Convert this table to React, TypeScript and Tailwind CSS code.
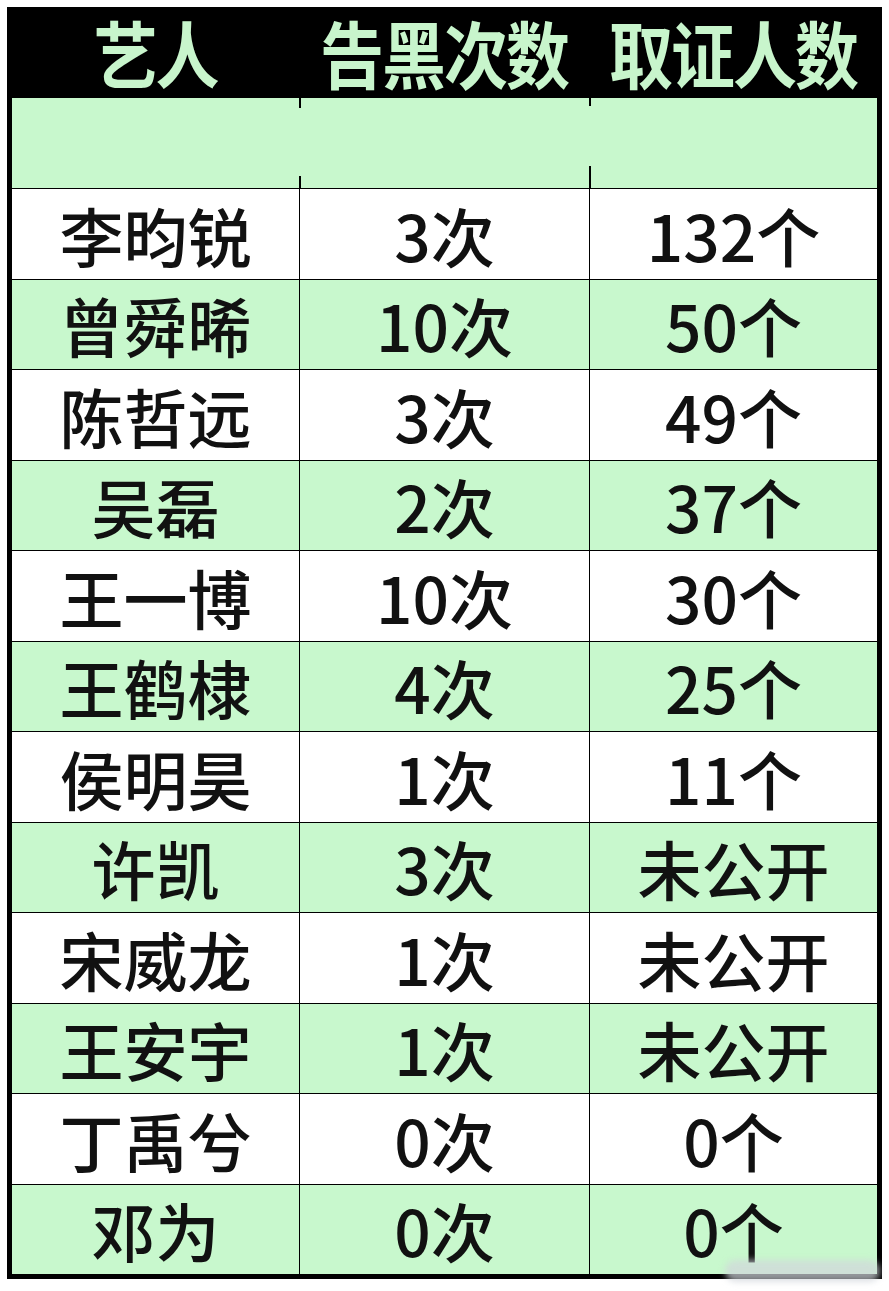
import { FC } from "react";

interface IRow {
  name: string;
  times: string;
  count: string;
}

const rows: IRow[] = [
  { name: "李昀锐", times: "3次", count: "132个" },
  { name: "曾舜晞", times: "10次", count: "50个" },
  { name: "陈哲远", times: "3次", count: "49个" },
  { name: "吴磊", times: "2次", count: "37个" },
  { name: "王一博", times: "10次", count: "30个" },
  { name: "王鹤棣", times: "4次", count: "25个" },
  { name: "侯明昊", times: "1次", count: "11个" },
  { name: "许凯", times: "3次", count: "未公开" },
  { name: "宋威龙", times: "1次", count: "未公开" },
  { name: "王安宇", times: "1次", count: "未公开" },
  { name: "丁禹兮", times: "0次", count: "0个" },
  { name: "邓为", times: "0次", count: "0个" },
];

const font = { fontFamily: '"Noto Sans CJK SC", "Noto Sans", sans-serif' };

const Cell: FC<{ text: string; first?: boolean }> = ({ text, first }) => (
  <div
    className={`flex items-center justify-center text-[64px] leading-none font-medium text-[#111] ${
      first ? "" : "border-l-[1.5px] border-black"
    }`}
  >
    {text}
  </div>
);

const Head: FC<{ text: string }> = ({ text }) => (
  <div className="flex items-center justify-center tracking-[-2px]">
    <span className="inline-block scale-y-[1.13]">{text}</span>
  </div>
);

const App: FC = () => {
  return (
    <div className="relative min-h-[1291px] w-[889px] bg-white pl-[7px] pt-[7px]" style={font}>
      <div className="w-[875px] border-x-[5px] border-b-[5px] border-black">
        <div className="grid h-[91px] grid-cols-[287px_290px_1fr] bg-black pb-[4px] text-[64px] font-bold leading-none text-[#c8f5cc]">
          <Head text="艺人" />
          <Head text="告黑次数" />
          <Head text="取证人数" />
        </div>
        <div className="grid h-[90px] grid-cols-[287px_290px_1fr] bg-[#c8f8cd]">
          <div />
          <div className="flex flex-col justify-between">
            <div className="h-[10px] w-[1.5px] bg-black" />
            <div className="h-[12px] w-[1.5px] bg-black" />
          </div>
          <div className="flex flex-col justify-between">
            <div className="h-[8px] w-[1.5px] bg-black" />
            <div className="h-[22px] w-[1.5px] bg-black" />
          </div>
        </div>
        {rows.map((r, i) => (
          <div
            key={r.name}
            className={`grid h-[90.5px] grid-cols-[287px_290px_1fr] border-t-[1.5px] border-black ${
              i % 2 === 0 ? "bg-white" : "bg-[#c8f8cd]"
            }`}
          >
            <Cell text={r.name} first />
            <Cell text={r.times} />
            <Cell text={r.count} />
          </div>
        ))}
      </div>
      <div className="absolute left-[725px] top-[1260px] h-[22px] w-[155px] rounded-full bg-gray-300/70 blur-[3px]" />
    </div>
  );
};

export default App;
